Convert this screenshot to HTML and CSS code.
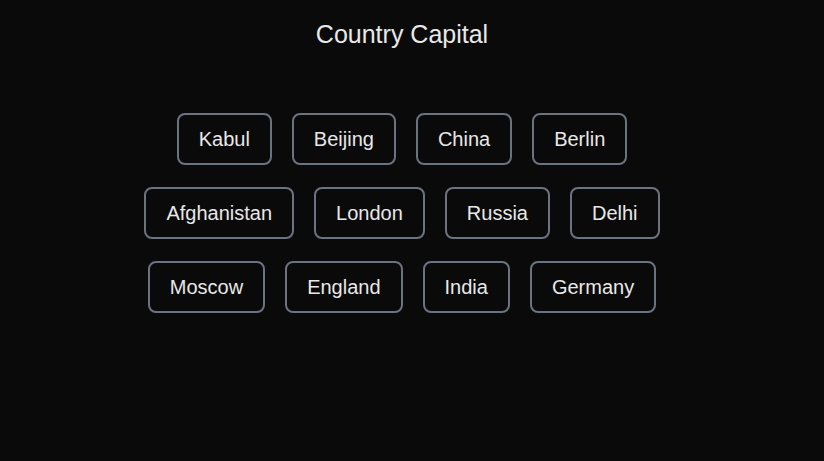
FILE: index.html
```html
<!DOCTYPE html>
<html lang="en">
<head>
<meta charset="utf-8">
<title>Country Capital</title>
<link rel="stylesheet" href="styles.css">
</head>
<body>
<main class="app">
  <h1 class="title">Country Capital</h1>
  <div class="board">
    <button class="tile">Kabul</button>
    <button class="tile">Beijing</button>
    <button class="tile">China</button>
    <button class="tile">Berlin</button>
    <button class="tile">Afghanistan</button>
    <button class="tile">London</button>
    <button class="tile">Russia</button>
    <button class="tile">Delhi</button>
    <button class="tile">Moscow</button>
    <button class="tile">England</button>
    <button class="tile">India</button>
    <button class="tile">Germany</button>
  </div>
</main>
</body>
</html>
```

FILE: styles.css
```css
html, body {
  margin: 0;
  padding: 0;
  background: #0a0a0a;
  height: 100%;
}
.app {
  box-sizing: border-box;
  padding: 20px 20px 0 0;
  font-family: "Liberation Sans", Arial, sans-serif;
  color: #e8e8e8;
}
.title {
  margin: 0;
  font-size: 25px;
  font-weight: 400;
  line-height: 29px;
  text-align: center;
}
.board {
  max-width: 540px;
  margin: 64px auto 0;
  display: flex;
  flex-wrap: wrap;
  justify-content: center;
  column-gap: 20px;
  row-gap: 22px;
}
.tile {
  font-family: "Liberation Sans", Arial, sans-serif;
  font-size: 20px;
  line-height: 22px;
  color: #e8e8e8;
  background: #0a0a0a;
  border: 2px solid #6b7280;
  border-radius: 8px;
  padding: 13px 20px;
  cursor: pointer;
}
```
